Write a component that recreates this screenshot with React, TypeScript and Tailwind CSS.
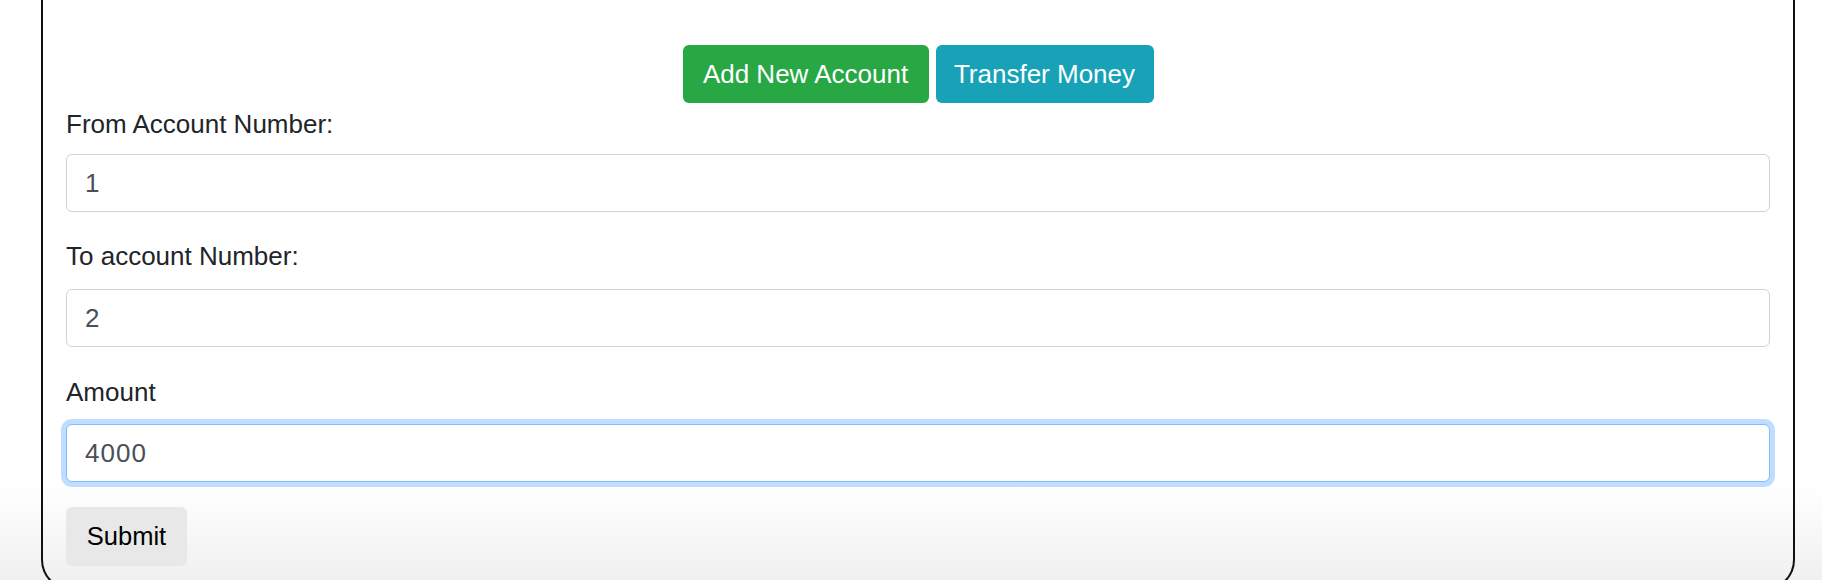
import { useState } from 'react'

function App() {
  const [fromAccount, setFromAccount] = useState("1")
  const [toAccount, setToAccount] = useState("2")
  const [amount, setAmount] = useState("4000")

  return (
    <main className="h-[580px] overflow-hidden bg-[linear-gradient(to_bottom,#ffffff_0px,#ffffff_485px,#f0f0f0_580px)] font-['Liberation_Sans',Arial,sans-serif] text-[#212529]">
      <div className="ml-[41px] w-[1754px] h-[590px] border-x-2 border-b-2 border-[#111] rounded-b-[30px] px-[23px] pt-[45px]">
        <div className="flex justify-center gap-[7px]">
          <button className="w-[246px] h-[58px] rounded-[6px] bg-[#28a745] text-white text-[26px]">
            Add New Account
          </button>
          <button className="w-[218px] h-[58px] rounded-[6px] bg-[#17a2b8] text-white text-[26px]">
            Transfer Money
          </button>
        </div>

        <form onSubmit={(e) => e.preventDefault()}>
          <div className="mt-[2px] mb-[25px]">
            <label htmlFor="from" className="block h-[38px] leading-[38px] text-[26px] mb-[11px]">
              From Account Number:
            </label>
            <input
              id="from"
              value={fromAccount}
              onChange={(e) => setFromAccount(e.target.value)}
              className="block w-full h-[58px] px-[18px] border border-[#ced4da] rounded-[6px] bg-white text-[26px] tracking-[1px] text-[#495057] outline-none"
            />
          </div>

          <div className="mb-[26px]">
            <label htmlFor="to" className="block h-[38px] leading-[38px] text-[26px] mb-[14px]">
              To account Number:
            </label>
            <input
              id="to"
              value={toAccount}
              onChange={(e) => setToAccount(e.target.value)}
              className="block w-full h-[58px] px-[18px] border border-[#ced4da] rounded-[6px] bg-white text-[26px] tracking-[1px] text-[#495057] outline-none"
            />
          </div>

          <div className="mb-[25px]">
            <label htmlFor="amount" className="block h-[38px] leading-[38px] text-[26px] mb-[13px]">
              Amount
            </label>
            <input
              id="amount"
              value={amount}
              onChange={(e) => setAmount(e.target.value)}
              className="block w-full h-[58px] px-[18px] border border-[#80bdff] rounded-[6px] bg-white text-[26px] tracking-[1px] text-[#495057] outline-none shadow-[0_0_0_5px_rgba(0,123,255,0.25)]"
            />
          </div>

          <button type="submit" className="w-[121px] h-[59px] rounded-[6px] bg-[#e8e8e8] text-black text-[25.5px]">
            Submit
          </button>
        </form>
      </div>
    </main>
  )
}
export default App
